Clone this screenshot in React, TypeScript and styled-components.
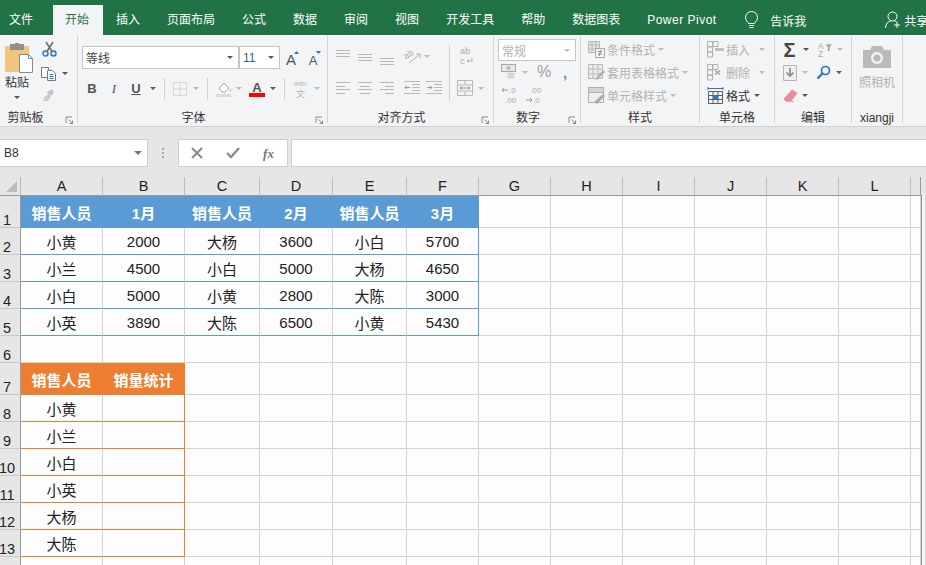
import React from "react";
import styled, { createGlobalStyle } from "styled-components";

const UI = `"Liberation Sans", "Noto Sans CJK SC", sans-serif`;

const Global = createGlobalStyle`
  html, body { margin: 0; padding: 0; width: 926px; height: 565px; overflow: hidden; background: #fff; }
  * { box-sizing: border-box; }
  #root { width: 926px; height: 565px; overflow: hidden; font-family: ${UI}; }
`;

const Page = styled.div`display: flex; flex-direction: column; width: 926px; height: 565px; overflow: hidden;`;

/* ---- Title tabs ---- */
const TabBar = styled.div`
  display: flex; flex: none; height: 35px; padding-top: 5px; background: #217346; color: #fff;
  font-size: 12px; white-space: nowrap; overflow: hidden;
`;
const Tab = styled.div<{ $active?: boolean; $first?: boolean }>`
  flex: none; height: 30px; line-height: 30px;
  padding: 0 ${p => (p.$first ? "20px" : "13.5px")} 0 ${p => (p.$first ? "9px" : p.$active ? "12px" : "13.5px")};
  color: ${p => (p.$active ? "#217346" : "#fff")};
  background: ${p => (p.$active ? "#f3f4f5" : "transparent")};
`;
const TabSpaced = styled(Tab)`letter-spacing: 0.5px; padding: 0 13.5px;`;
const TabExtra = styled.div<{ $ml: number }>`
  flex: none; display: flex; align-items: center; height: 30px; margin-left: ${p => p.$ml}px;
`;

/* ---- Ribbon ---- */
const Ribbon = styled.div`
  display: flex; flex: none; height: 92px; background: #f3f4f5; border-bottom: 1px solid #d2d2d2;
  color: #333;
`;
const Group = styled.div<{ $w: number }>`
  position: relative; flex: none; display: flex; flex-direction: column; width: ${p => p.$w}px;
  height: 88px; border-right: 1px solid #d4d4d4;
`;
const GroupBody = styled.div<{ $pt: number; $row?: boolean }>`
  flex: 1; min-height: 0; display: flex; flex-direction: ${p => (p.$row ? "row" : "column")};
  padding-top: ${p => p.$pt}px;
`;
const GroupLabel = styled.div<{ $pr?: number }>`
  flex: none; height: 15px; margin-bottom: -3px; line-height: 15px; text-align: center; font-size: 12px; color: #333;
  padding-right: ${p => p.$pr ?? 0}px;
`;
const Launcher = styled.svg`position: absolute; right: 3px; bottom: -2px;`;
const Row = styled.div<{ $h?: number; $ml?: number; $mt?: number }>`
  display: flex; align-items: center; flex: none;
  height: ${p => p.$h ?? 22}px; margin-left: ${p => p.$ml ?? 0}px; margin-top: ${p => p.$mt ?? 0}px;
`;
const Tool = styled.div<{ $w: number; $ml?: number }>`
  flex: none; display: flex; align-items: center; justify-content: center;
  width: ${p => p.$w}px; margin-left: ${p => p.$ml ?? 0}px;
`;
const Caret = styled.span<{ $on?: boolean; $ml?: number }>`
  flex: none; width: 0; height: 0; margin-left: ${p => p.$ml ?? 0}px;
  border-left: 3px solid transparent; border-right: 3px solid transparent;
  border-top: 3px solid ${p => (p.$on ? "#555" : "#bcbcbc")};
`;
const VSep = styled.div<{ $ml?: number; $h?: number }>`
  flex: none; width: 1px; height: ${p => p.$h ?? 22}px; background: #d0d0d0; margin-left: ${p => p.$ml ?? 0}px;
`;
const Column = styled.div<{ $w?: number; $ml?: number; $center?: boolean }>`
  display: flex; flex-direction: column; flex: none; width: ${p => (p.$w ? `${p.$w}px` : "auto")};
  margin-left: ${p => p.$ml ?? 0}px; align-items: ${p => (p.$center ? "center" : "stretch")};
`;
const ToolText = styled.span<{ $on?: boolean; $ml?: number }>`
  font-size: 12px; white-space: nowrap; color: ${p => (p.$on ? "#333" : "#b2b2b2")};
  margin-left: ${p => p.$ml ?? 2}px;
`;
const PasteText = styled.div`font-size: 12px; line-height: 14px; margin: 3px 0 6px; color: #333;`;
const Select = styled.div<{ $w: number; $h?: number; $ml?: number; $blue?: boolean; $muted?: boolean }>`
  flex: none; display: flex; align-items: center; justify-content: space-between;
  width: ${p => p.$w}px; height: ${p => p.$h ?? 23}px; margin-left: ${p => p.$ml ?? 0}px; padding: 0 5px 0 3px;
  background: #fff; border: 1px solid #c6c6c6; font-size: 12px;
  color: ${p => (p.$muted ? "#b0b0b0" : p.$blue ? "#2f5f8f" : "#444")};
`;
const CameraText = styled.div`font-size: 12px; line-height: 14px; margin-top: 8px; color: #b2b2b2;`;

/* ---- Formula bar ---- */
const FormulaBar = styled.div`
  flex: none; display: flex; height: 50px; padding-top: 12px; background: #e6e6e6;
`;
const NameBox = styled.div`
  flex: none; display: flex; align-items: center; justify-content: space-between; width: 148px; height: 28px;
  padding: 0 5px 0 4px; background: #fff; border: 1px solid #cfcfcf; border-left: 0; font-size: 12px; color: #333;
`;
const Grip = styled.div`
  flex: none; display: flex; flex-direction: column; justify-content: center; gap: 2px; align-items: center;
  width: 30px; height: 28px;
  span { width: 2px; height: 2px; background: #a6a6a6; }
`;
const FuncBox = styled.div`
  flex: none; display: flex; align-items: center; width: 110px; height: 28px;
  background: #fff; border: 1px solid #cfcfcf;
`;
const FormulaInput = styled.div`
  flex: 1; height: 28px; margin-left: 3px; background: #fff; border: 1px solid #cfcfcf; border-right: 0;
`;

/* ---- Sheet ---- */
const SheetWrap = styled.div`flex: 1; min-height: 0; display: flex; background: #e6e6e6;`;
const Sheet = styled.div`
  flex: none; display: grid; width: 921px; align-content: start;
  grid-template-columns: 21px 82px 82px 75px 73px 74px 72px 72px 72px 72px 72px 72px 72px 10px;
  grid-template-rows: 19px 32px 27px 27px 27px 27px 27px 32px 27px 27px 27px 27px 27px 27px 27px;
`;
const ScrollEdge = styled.div`
  flex: none; width: 5px; margin-top: 18px; background: #f6f6f6; border-left: 1px solid #8f8f8f; border-right: 1px solid #d0d0d0;
`;
const Corner = styled.div`
  display: flex; align-items: flex-end; justify-content: flex-end; padding: 0 3px 3px 0;
  background: #e6e6e6; border-right: 1px solid #b8b8b8; border-bottom: 1px solid #9a9a9a;
`;
const ColHead = styled.div<{ $last?: boolean }>`
  display: flex; align-items: center; justify-content: center; font-size: 14.5px; color: #222; line-height: 18px;
  background: #e6e6e6; border-bottom: 1px solid #9a9a9a;
  border-right: ${p => (p.$last ? "1px solid #9a9a9a" : "1px solid #bdbdbd")};
`;
const RowHead = styled.div`
  display: flex; align-items: flex-end; justify-content: center; padding: 0 6px 0 0; font-size: 14.5px; line-height: 14px;
  color: #222; background: #e6e6e6; border-right: 1px solid #9a9a9a; border-bottom: 1px solid #c8c8c8; white-space: nowrap;
`;
type Tone = "plain" | "blueHead" | "orangeHead" | "blue" | "orange";
const lineColor = (t: Tone) => (t === "blue" ? "#5b9bd5" : t === "orange" ? "#ed7d31" : "#d4d4d4");
const Cell = styled.div<{ $tone: Tone; $edge?: boolean }>`
  display: flex; align-items: center; justify-content: center; padding-top: 1px; overflow: hidden;
  font-size: 15px; white-space: nowrap;
  color: ${p => (p.$tone === "blueHead" || p.$tone === "orangeHead" ? "#fff" : "#222")};
  font-weight: ${p => (p.$tone === "blueHead" || p.$tone === "orangeHead" ? 700 : 400)};
  background: ${p => (p.$tone === "blueHead" ? "#5b9bd5" : p.$tone === "orangeHead" ? "#ed7d31" : "#fdfdfd")};
  border-bottom: 1px solid ${p => (p.$tone === "blueHead" ? "#5b9bd5" : p.$tone === "orangeHead" ? "#ed7d31" : lineColor(p.$tone))};
  border-right: 1px solid ${p =>
    p.$tone === "blueHead" ? "#5b9bd5" : p.$tone === "orangeHead" ? "#ed7d31" : p.$edge ? lineColor(p.$tone) : "#d4d4d4"};
`;

/* ---- Icons ---- */
const Ic: React.FC<{ w: number; h: number; children: React.ReactNode }> = ({ w, h, children }) => (
  <svg width={w} height={h} viewBox={`0 0 ${w} ${h}`} fill="none">{children}</svg>
);
const LauncherIcon = () => (
  <Launcher width="9" height="9" viewBox="0 0 9 9" fill="none" stroke="#8a8a8a">
    <path d="M1 7V1h6" /><path d="M3.5 3.5 7.5 7.5M7.5 4.5v3h-3" />
  </Launcher>
);
const PasteIcon = () => (
  <Ic w={29} h={30}>
    <rect x="0" y="3" width="24" height="26" rx="1" fill="#f0c67c" />
    <rect x="5" y="1" width="14" height="6" fill="#8f8f8f" />
    <rect x="10" y="0" width="4" height="3" fill="#8f8f8f" />
    <path d="M14.5 11.5h9l4 4v14h-13z" fill="#fff" stroke="#8a8a8a" />
    <path d="M23.5 11.5v4h4" stroke="#8a8a8a" />
  </Ic>
);
const Scissors = () => (
  <Ic w={15} h={16}>
    <circle cx="3.5" cy="12.5" r="2.5" stroke="#2f75b5" strokeWidth="1.4" />
    <circle cx="11.5" cy="12.5" r="2.5" stroke="#2f75b5" strokeWidth="1.4" />
    <path d="M5 10.5 11 1M10 10.5 4 1" stroke="#6e6e6e" strokeWidth="1.6" />
  </Ic>
);
const CopyIcon = () => (
  <Ic w={15} h={15}>
    <path d="M.5 1.5h7v10h-7z" fill="#fff" stroke="#7a7a7a" />
    <path d="M6.5 4.5h5l3 3v7h-8z" fill="#fff" stroke="#7a7a7a" />
    <path d="M8.5 8.5h4M8.5 10.5h4M8.5 12.5h4" stroke="#2f75b5" />
  </Ic>
);
const Brush = () => (
  <Ic w={16} h={14}>
    <path d="M6 4 11 1l2 3-2 3-3 1z" fill="#c4c4c4" />
    <path d="M7 6l3 3-3 4-5 0 2-3-2 0z" fill="#cdcdcd" />
  </Ic>
);
const BorderIcon = () => (
  <Ic w={14} h={14}>
    <path d="M.5.5h13v13H.5zM7 .5v13M.5 7h13" stroke="#bdbdbd" strokeDasharray="1 1" />
  </Ic>
);
const FillIcon = () => (
  <Ic w={16} h={16}>
    <path d="M3 7 8 2l5 5-4 4H6z" fill="#fff" stroke="#a8a8a8" />
    <path d="M14 7.5c1 1.5 1.5 2.5 1 3s-1.5 0-1-3z" fill="#b5b5b5" />
    <rect x="0" y="13" width="15" height="3" fill="#dcdcdc" />
  </Ic>
);
const FontColor = () => (
  <Ic w={16} h={17}>
    <text x="8" y="12" textAnchor="middle" fontSize="13" fontWeight="700" fontFamily="Liberation Sans" fill="#555">A</text>
    <rect x="0" y="13" width="16" height="4" fill="#f00" />
  </Ic>
);
const Wen = () => (
  <Ic w={17} h={20}>
    <text x="8.5" y="7" textAnchor="middle" fontSize="7" fontFamily="Liberation Sans" fill="#b8b8b8">wén</text>
    <text x="8.5" y="18" textAnchor="middle" fontSize="9" fontFamily="Noto Sans CJK SC" fill="#b8b8b8">文</text>
  </Ic>
);
const GrowA: React.FC<{ size: number; up?: boolean }> = ({ size, up }) => (
  <Ic w={15} h={18}>
    <text x="6" y="16" textAnchor="middle" fontSize={size} fontFamily="Liberation Sans" fill="#555">A</text>
    <path d={up ? "M9 5 11.5 2 14 5z" : "M9 2h5l-2.5 3z"} fill="#2f75b5" />
  </Ic>
);
const Lines: React.FC<{ ys: number[]; xs?: [number, number][] }> = ({ ys, xs }) => (
  <Ic w={14} h={18}>
    {ys.map((y, i) => {
      const [a, b] = xs ? xs[i % xs.length] : [0, 14];
      return <path key={y} d={`M${a} ${y + 0.5}H${b}`} stroke="#b9b9b9" />;
    })}
  </Ic>
);
const Orient = () => (
  <Ic w={18} h={18}>
    <text x="1" y="10" fontSize="9" fontFamily="Liberation Sans" fill="#aaa" transform="rotate(-35 6 8)">ab</text>
    <path d="M6 16 17 7M17 7h-4M17 7v4" stroke="#b5b5b5" />
  </Ic>
);
const Indent: React.FC<{ dir: "in" | "out" }> = ({ dir }) => (
  <Ic w={16} h={14}>
    <path d="M0 .5h16M8 3.5h8M8 6.5h8M8 9.5h8M0 12.5h16" stroke="#b9b9b9" />
    {dir === "out"
      ? <path d="M6 6.5H1M3 4.5l-2 2 2 2" stroke="#9a9a9a" />
      : <path d="M1 6.5h5M4 4.5l2 2-2 2" stroke="#9a9a9a" />}
  </Ic>
);
const WrapIcon = () => (
  <Ic w={14} h={20}>
    <text x="1" y="8" fontSize="9" fontFamily="Liberation Sans" fill="#aaa">ab</text>
    <text x="1" y="18" fontSize="9" fontFamily="Liberation Sans" fill="#aaa">c</text>
    <path d="M13 12v3H8M9.5 13.5 8 15 9.5 16.5" stroke="#aaa" />
  </Ic>
);
const MergeIcon = () => (
  <Ic w={16} h={16}>
    <path d="M.5.5h15v15H.5zM.5 5h15M.5 11h15M8 .5V5M8 11v4.5" stroke="#b9b9b9" />
    <path d="M3 8h10M5 6.5 3 8l2 1.5M11 6.5 13 8l-2 1.5" stroke="#9a9a9a" />
  </Ic>
);
const Currency = () => (
  <Ic w={16} h={16}>
    <rect x=".5" y=".5" width="14" height="7" stroke="#a8a8a8" fill="#e8e8e8" />
    <circle cx="7.5" cy="4" r="2" fill="#bbb" />
    <ellipse cx="10" cy="10" rx="4" ry="1.6" fill="#d5d5d5" />
    <ellipse cx="10" cy="13" rx="4" ry="1.6" fill="#d5d5d5" />
  </Ic>
);
const Glyph = styled.span<{ $size: number; $bold?: boolean; $italic?: boolean; $c?: string; $serif?: boolean; $under?: boolean }>`
  font-size: ${p => p.$size}px; line-height: 1; font-weight: ${p => (p.$bold ? 700 : 400)};
  font-style: ${p => (p.$italic ? "italic" : "normal")}; color: ${p => p.$c ?? "#555"};
  text-decoration: ${p => (p.$under ? "underline" : "none")};
  font-family: ${p => (p.$serif ? `"Liberation Serif", serif` : `"Liberation Sans", sans-serif`)};
`;
const Decimal: React.FC<{ more?: boolean }> = ({ more }) => (
  <Ic w={16} h={20}>
    <text x={more ? 4 : 7} y="8" fontSize="8" fontFamily="Liberation Sans" fill="#aaa">{more ? ".00" : ".0"}</text>
    <text x={more ? 7 : 3} y="18" fontSize="8" fontFamily="Liberation Sans" fill="#aaa">{more ? ".0" : ".00"}</text>
    <path d={more ? "M0 15h6M4 13l2 2-2 2" : "M0 5h6M2 3 0 5l2 2"} stroke="#9a9a9a" />
  </Ic>
);
const CondIcon = () => (
  <Ic w={17} h={17}>
    <path d="M.5.5h11v11H.5zM.5 4h11M.5 8h11M4 .5v11M8 .5v11" stroke="#b8b8b8" fill="#e4e4e4" />
    <path d="M7.5 7.5h9v9h-9z" fill="#f3f4f5" stroke="#a8a8a8" />
    <path d="M10 10.5h4M10 13h4M13 9l-2 6" stroke="#8e8e8e" />
  </Ic>
);
const TableIcon = () => (
  <Ic w={17} h={17}>
    <path d="M.5.5h14v14H.5zM.5 5h14M.5 10h14M5 .5v14M10 .5v14" stroke="#b8b8b8" fill="#ececec" />
    <path d="M7 15 15 6l2 2-8 8z" fill="#b0b0b0" />
  </Ic>
);
const StyleIcon = () => (
  <Ic w={17} h={17}>
    <path d="M.5.5h15v15H.5z" stroke="#b0b0b0" fill="#efefef" />
    <path d="M.5.5h15v5H.5z" fill="#d4d4d4" stroke="#b0b0b0" />
    <path d="M6 15 15 7l2 2-8 8z" fill="#adadad" />
  </Ic>
);
const CellOpIcon: React.FC<{ kind: "add" | "del" }> = ({ kind }) => (
  <Ic w={17} h={17}>
    <path d="M.5.5h5v5h-5zM.5 11h5v5h-5zM6 .5h5v5H6zM.5 6h5v5h-5z" stroke="#b0b0b0" />
    {kind === "add"
      ? <path d="M8 7h9v3H8z" fill="#c0c0c0" />
      : <path d="M8 6.5l5 4M13 6.5l-5 4" stroke="#a0a0a0" strokeWidth="1.4" />}
  </Ic>
);
const FormatIcon = () => (
  <Ic w={17} h={17}>
    <path d="M1.5 4.5h14v12h-14zM1.5 8.5h14M1.5 12.5h14M6 4.5v12M11 4.5v12" stroke="#5f5f5f" />
    <rect x="6" y="8" width="5" height="5" fill="#2f75b5" />
    <path d="M1 1.5h15M1 0v3M16 0v3" stroke="#2f75b5" />
  </Ic>
);
const DownFill = () => (
  <Ic w={14} h={16}>
    <path d="M.5.5h13v15H.5z" stroke="#b5b5b5" fill="#efefef" />
    <path d="M7 3v7M3.5 7.5 7 11l3.5-3.5" stroke="#8a8a8a" strokeWidth="1.6" />
  </Ic>
);
const SortIcon = () => (
  <Ic w={15} h={19}>
    <text x="0" y="9" fontSize="9" fontFamily="Liberation Sans" fill="#aaa">A</text>
    <text x="0" y="18" fontSize="9" fontFamily="Liberation Sans" fill="#aaa">Z</text>
    <path d="M8 4h7l-2.5 3v4h-2V7z" fill="#a8a8a8" />
  </Ic>
);
const FindIcon = () => (
  <Ic w={15} h={15}>
    <circle cx="9.5" cy="5.5" r="4" stroke="#2f75b5" strokeWidth="1.7" fill="#fff" />
    <path d="M6.5 8.5 1.5 13.5" stroke="#2f75b5" strokeWidth="2.4" />
  </Ic>
);
const Eraser = () => (
  <Ic w={15} h={13}>
    <path d="M9 .5 14.5 4 8 12.5H3L.5 10z" fill="#ec8a9a" />
    <path d="M3 12.5h8" stroke="#e9a9b4" />
  </Ic>
);
const Camera = () => (
  <Ic w={28} h={23}>
    <path d="M0 5h7l2-4h10l2 4h7v18H0z" fill="#bababa" />
    <circle cx="14" cy="13" r="6" fill="#f3f4f5" />
    <circle cx="14" cy="13" r="3.6" fill="#bababa" />
  </Ic>
);
const Bulb = () => (
  <Ic w={17} h={18}>
    <path d="M5.5 12.5C4.5 10.5 2.5 9.5 2.5 6.5a6 6 0 0 1 12 0c0 3-2 4-3 6z" stroke="#fff" />
    <path d="M6 14.5h5M6.5 16.5h4" stroke="#fff" />
  </Ic>
);
const Person = () => (
  <Ic w={16} h={18}>
    <circle cx="7.5" cy="5.5" r="4.5" stroke="#fff" />
    <path d="M.5 17c0-4 2.5-6.5 5-7M9.5 10c.8.2 1.5.5 2.2 1" stroke="#fff" />
    <path d="M12 11v6M9 14h6" stroke="#fff" />
  </Ic>
);
const NameCaret = styled.span`
  width: 0; height: 0; border-left: 4px solid transparent; border-right: 4px solid transparent; border-top: 4px solid #777;
`;

/* ---- Data ---- */
const COLS = ["A", "B", "C", "D", "E", "F", "G", "H", "I", "J", "K", "L", ""];
const HEIGHT_ROWS = 14;
type CellData = { text: string; tone: Tone; edge?: boolean };
const upper = [
  ["销售人员", "1月", "销售人员", "2月", "销售人员", "3月"],
  ["小黄", "2000", "大杨", "3600", "小白", "5700"],
  ["小兰", "4500", "小白", "5000", "大杨", "4650"],
  ["小白", "5000", "小黄", "2800", "大陈", "3000"],
  ["小英", "3890", "大陈", "6500", "小黄", "5430"],
];
const lower = [["销售人员", "销量统计"], ["小黄", ""], ["小兰", ""], ["小白", ""], ["小英", ""], ["大杨", ""], ["大陈", ""]];
const cellAt = (r: number, c: number): CellData => {
  if (r < 5 && c < 6) return { text: upper[r][c], tone: r === 0 ? "blueHead" : "blue", edge: c === 5 };
  if (r >= 6 && r < 13 && c < 2) return { text: lower[r - 6][c], tone: r === 6 ? "orangeHead" : "orange", edge: c === 1 };
  return { text: "", tone: "plain" };
};
const tabs = ["插入", "页面布局", "公式", "数据", "审阅", "视图", "开发工具", "帮助", "数据图表"];

export default function App() {
  return (
    <Page>
      <Global />
      <TabBar>
        <Tab $first>文件</Tab>
        <Tab $active>开始</Tab>
        {tabs.map(t => <Tab key={t}>{t}</Tab>)}
        <TabSpaced>Power Pivot</TabSpaced>
        <TabExtra $ml={13}><Bulb /></TabExtra>
        <TabExtra $ml={10}>告诉我</TabExtra>
        <TabExtra $ml={79}><Person /></TabExtra>
        <TabExtra $ml={3}>共享</TabExtra>
      </TabBar>

      <Ribbon>
        <Group $w={78}>
          <GroupBody $pt={8} $row>
            <Column $w={36} $ml={5}>
              <PasteIcon />
              <PasteText>粘贴</PasteText>
              <Tool $w={24}><Caret $on /></Tool>
            </Column>
            <Column>
              <Row $h={18} $mt={-3}><Tool $w={15} $ml={1}><Scissors /></Tool></Row>
              <Row $h={23} $mt={4}>
                <Tool $w={15}><CopyIcon /></Tool>
                <Caret $on $ml={6} />
              </Row>
              <Row $h={20}><Tool $w={16}><Brush /></Tool></Row>
            </Column>
          </GroupBody>
          <GroupLabel $pr={26}>剪贴板</GroupLabel>
          <LauncherIcon />
        </Group>

        <Group $w={250}>
          <GroupBody $pt={11}>
            <Row $h={23} $ml={4}>
              <Select $w={157}>等线<Caret $on /></Select>
              <Select $w={41} $blue>11<Caret $on /></Select>
              <Tool $w={15} $ml={5}><GrowA size={15} up /></Tool>
              <Tool $w={15} $ml={7}><GrowA size={13} /></Tool>
            </Row>
            <Row $h={23} $ml={3} $mt={8}>
              <Tool $w={22}><Glyph $size={13} $bold>B</Glyph></Tool>
              <Tool $w={22}><Glyph $size={13} $italic $serif>I</Glyph></Tool>
              <Tool $w={22}><Glyph $size={13} $bold $under>U</Glyph></Tool>
              <Tool $w={12}><Caret $on /></Tool>
              <VSep $ml={5} />
              <Tool $w={14} $ml={8}><BorderIcon /></Tool>
              <Tool $w={18}><Caret /></Tool>
              <VSep $ml={2} />
              <Tool $w={16} $ml={8}><FillIcon /></Tool>
              <Tool $w={14}><Caret /></Tool>
              <Tool $w={16} $ml={3}><FontColor /></Tool>
              <Tool $w={16}><Caret $on /></Tool>
              <VSep $ml={3} />
              <Tool $w={17} $ml={7}><Wen /></Tool>
              <Tool $w={15}><Caret /></Tool>
            </Row>
          </GroupBody>
          <GroupLabel $pr={18}>字体</GroupLabel>
          <LauncherIcon />
        </Group>

        <Group $w={166}>
          <GroupBody $pt={10} $row>
            <Column $w={121}>
              <Row $ml={8}>
                <Tool $w={14}><Lines ys={[3, 6, 9]} /></Tool>
                <Tool $w={14} $ml={8}><Lines ys={[7, 10, 13]} /></Tool>
                <Tool $w={14} $ml={8}><Lines ys={[11, 14, 17]} /></Tool>
                <Tool $w={18} $ml={9}><Orient /></Tool>
                <Tool $w={11}><Caret /></Tool>
              </Row>
              <Row $ml={8} $mt={10}>
                <Tool $w={14}><Lines ys={[3, 7, 10, 14]} xs={[[0, 14], [0, 9]]} /></Tool>
                <Tool $w={14} $ml={8}><Lines ys={[3, 7, 10, 14]} xs={[[0, 14], [2, 12]]} /></Tool>
                <Tool $w={14} $ml={8}><Lines ys={[3, 7, 10, 14]} xs={[[0, 14], [5, 14]]} /></Tool>
                <Tool $w={16} $ml={10}><Indent dir="out" /></Tool>
                <Tool $w={16} $ml={6}><Indent dir="in" /></Tool>
              </Row>
            </Column>
            <VSep $h={56} />
            <Column>
              <Row><Tool $w={14} $ml={9}><WrapIcon /></Tool></Row>
              <Row $mt={10}>
                <Tool $w={16} $ml={7}><MergeIcon /></Tool>
                <Tool $w={16}><Caret /></Tool>
              </Row>
            </Column>
          </GroupBody>
          <GroupLabel $pr={18}>对齐方式</GroupLabel>
          <LauncherIcon />
        </Group>

        <Group $w={87}>
          <GroupBody $pt={4}>
            <Row $ml={4}><Select $w={78} $h={22} $muted>常规<Caret /></Select></Row>
            <Row $ml={7}>
              <Tool $w={16}><Currency /></Tool>
              <Tool $w={16}><Caret /></Tool>
              <Tool $w={22}><Glyph $size={16} $c="#a0a0a0">%</Glyph></Tool>
              <Tool $w={20}><Glyph $size={15} $bold $c="#8a8a8a">,</Glyph></Tool>
            </Row>
            <Row $ml={8} $mt={1}>
              <Tool $w={16}><Decimal /></Tool>
              <Tool $w={16} $ml={8}><Decimal more /></Tool>
            </Row>
          </GroupBody>
          <GroupLabel $pr={18}>数字</GroupLabel>
          <LauncherIcon />
        </Group>

        <Group $w={119}>
          <GroupBody $pt={3}>
            <Row $h={23} $ml={7}><CondIcon /><ToolText>条件格式</ToolText><Caret $ml={3} /></Row>
            <Row $h={23} $ml={7}><TableIcon /><ToolText>套用表格格式</ToolText><Caret $ml={3} /></Row>
            <Row $h={23} $ml={7}><StyleIcon /><ToolText>单元格样式</ToolText><Caret $ml={3} /></Row>
          </GroupBody>
          <GroupLabel>样式</GroupLabel>
        </Group>

        <Group $w={75}>
          <GroupBody $pt={3}>
            <Row $h={23} $ml={7}><CellOpIcon kind="add" /><ToolText>插入</ToolText><Caret $ml={9} /></Row>
            <Row $h={23} $ml={7}><CellOpIcon kind="del" /><ToolText>删除</ToolText><Caret $ml={9} /></Row>
            <Row $h={23} $ml={7}><FormatIcon /><ToolText $on>格式</ToolText><Caret $on $ml={4} /></Row>
          </GroupBody>
          <GroupLabel>单元格</GroupLabel>
        </Group>

        <Group $w={77}>
          <GroupBody $pt={3}>
            <Row $h={23} $ml={7}>
              <Tool $w={15}><Glyph $size={20} $bold $c="#444">Σ</Glyph></Tool>
              <Tool $w={18}><Caret $on /></Tool>
              <Tool $w={14} $ml={3}><SortIcon /></Tool>
              <Tool $w={16}><Caret /></Tool>
            </Row>
            <Row $h={23} $ml={8}>
              <Tool $w={14}><DownFill /></Tool>
              <Tool $w={16}><Caret /></Tool>
              <Tool $w={15} $ml={3}><FindIcon /></Tool>
              <Tool $w={16}><Caret $on /></Tool>
            </Row>
            <Row $h={23} $ml={8}>
              <Tool $w={15}><Eraser /></Tool>
              <Tool $w={14}><Caret $on /></Tool>
            </Row>
          </GroupBody>
          <GroupLabel>编辑</GroupLabel>
        </Group>

        <Group $w={51}>
          <GroupBody $pt={10}>
            <Column $center>
              <Camera />
              <CameraText>照相机</CameraText>
            </Column>
          </GroupBody>
          <GroupLabel>xiangji</GroupLabel>
        </Group>
      </Ribbon>

      <FormulaBar>
        <NameBox>B8<NameCaret /></NameBox>
        <Grip><span /><span /><span /></Grip>
        <FuncBox>
          <Tool $w={36}>
            <Ic w={12} h={12}><path d="M1 1l10 10M11 1 1 11" stroke="#8a8a8a" strokeWidth="2" /></Ic>
          </Tool>
          <Tool $w={36}>
            <Ic w={14} h={12}><path d="M1 6l4 4 8-9" stroke="#8a8a8a" strokeWidth="2.4" /></Ic>
          </Tool>
          <Tool $w={35}><Glyph $size={13} $italic $bold $serif $c="#777">fx</Glyph></Tool>
        </FuncBox>
        <FormulaInput />
      </FormulaBar>

      <SheetWrap>
        <Sheet>
          <Corner>
            <Ic w={11} h={11}><path d="M11 0v11H0z" fill="#bcbcbc" /></Ic>
          </Corner>
          {COLS.map((c, i) => <ColHead key={i} $last={i === COLS.length - 1}>{c}</ColHead>)}
          {Array.from({ length: HEIGHT_ROWS }).map((_, r) => (
            <React.Fragment key={r}>
              <RowHead>{r === 13 ? "" : r + 1}</RowHead>
              {COLS.map((_c, c) => {
                const d = cellAt(r, c);
                return <Cell key={c} $tone={d.tone} $edge={d.edge}>{d.text}</Cell>;
              })}
            </React.Fragment>
          ))}
        </Sheet>
        <ScrollEdge />
      </SheetWrap>
    </Page>
  );
}
